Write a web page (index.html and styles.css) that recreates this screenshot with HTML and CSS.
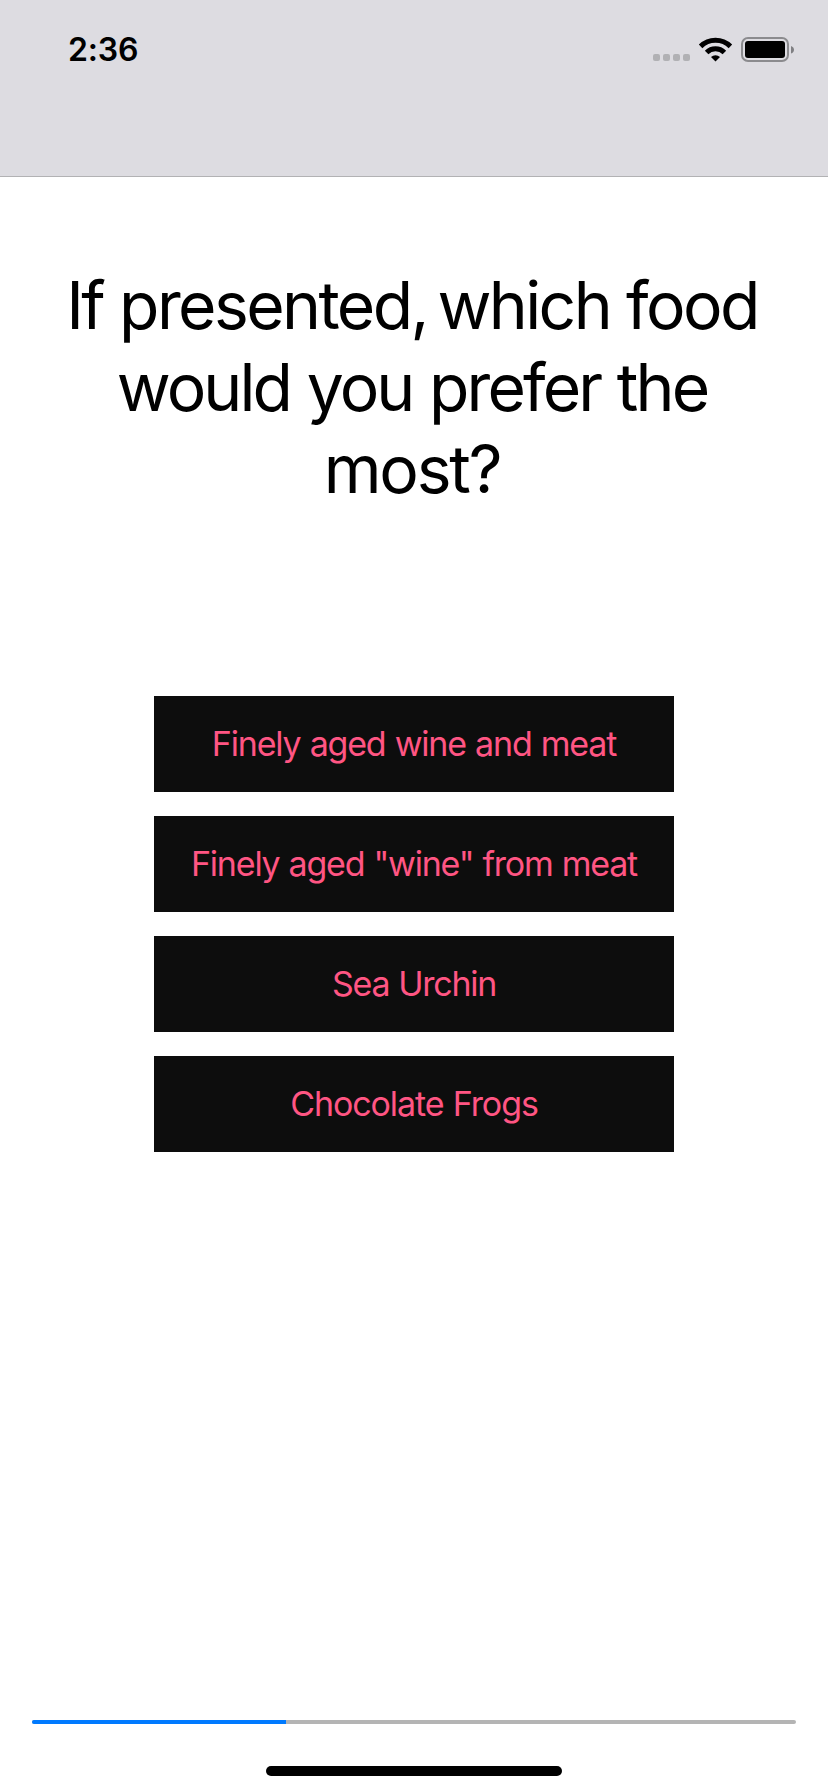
FILE: index.html
```html
<!DOCTYPE html>
<html lang="en">
<head>
<meta charset="utf-8">
<title>Question</title>
<link rel="stylesheet" href="styles.css">
</head>
<body>
<div class="screen">
  <header class="nav-bar">
    <span class="time">2:36</span>
    <svg class="status-icons" width="144" height="32" viewBox="650 32 144 32">
      <g fill="#b1b1b4">
        <rect x="653" y="54" width="7" height="7" rx="2"/>
        <rect x="663" y="54" width="7" height="7" rx="2"/>
        <rect x="673" y="54" width="7" height="7" rx="2"/>
        <rect x="683" y="54" width="7" height="7" rx="2"/>
      </g>
      <g fill="none" stroke="#000" stroke-width="5">
        <path d="M700.6 46.4a21.2 21.2 0 0 1 29.8 0"/>
        <path d="M706.6 52.5a12.7 12.7 0 0 1 17.8 0"/>
      </g>
      <path d="M711 56.9a6.6 6.6 0 0 1 9 0l-4.5 4.5z"/>
      <rect x="742" y="38" width="46" height="23" rx="6" fill="none" stroke="#8b8b8e" stroke-width="2"/>
      <rect x="745" y="41" width="40" height="17" rx="3"/>
      <path d="M791 46c4 1.4 4 6.200 0 7.600z" fill="#7f7f82"/>
    </svg>
  </header>
  <main class="content">
    <h1 class="question"><span class="line-1">If presented<span class="comma">,</span> which food</span><br><span class="line-2">would you prefer the</span><br><span class="line-3">most?</span></h1>
    <div class="answers">
      <button class="answer wine">Finely aged wine and meat</button>
      <button class="answer from-meat">Finely aged "wine" from meat</button>
      <button class="answer urchin">Sea Urchin</button>
      <button class="answer frogs">Chocolate Frogs</button>
    </div>
  </main>
  <footer class="footer">
    <div class="progress"><div class="progress-fill"></div></div>
    <div class="home-indicator"></div>
  </footer>
</div>
</body>
</html>
```
FILE: styles.css
```css
* { box-sizing: border-box; }
body { margin: 0; background: #fff; font-family: Inter, "Liberation Sans", sans-serif; }
.screen { width: 828px; height: 1792px; display: flex; flex-direction: column; overflow: hidden; }
.nav-bar {
  height: 177px; flex: none; display: flex; justify-content: space-between; align-items: flex-start;
  padding: 32px 34px 0 68px; background: #dddce1; border-bottom: 1px solid #b2b2b4;
}
.time { font-size: 32px; font-weight: 600; line-height: 36px; letter-spacing: -0.2px; }
.status-icons { display: block; }
.content { flex: 1; padding-top: 87px; display: flex; flex-direction: column; align-items: center; }
.question {
  margin: 0; padding-right: 4px; font-size: 66px; line-height: 82px; font-weight: 400;
  letter-spacing: -2.2px; text-align: center; white-space: nowrap; color: #000;
}
.line-1 { letter-spacing: -2.6px; word-spacing: 0; }
.comma { letter-spacing: -8.1px; }
.line-2 { letter-spacing: -2.9px; word-spacing: 1px; }
.answers { margin-top: 186px; width: 520px; display: flex; flex-direction: column; gap: 24px; }
.answer {
  height: 96px; padding: 0; border: 0; background: #0d0d0d; color: #ff5583;
  font: 400 34px/96px Inter, "Liberation Sans", sans-serif; text-align: center; white-space: nowrap;
  letter-spacing: -1.2px; word-spacing: 0.9px;
}
.from-meat { word-spacing: 0.7px; }
.urchin { letter-spacing: -1.3px; }
.frogs { letter-spacing: -1.1px; }
.footer { padding: 0 32px 16px; display: flex; flex-direction: column; align-items: center; }
.progress { width: 764px; height: 4px; border-radius: 2px; overflow: hidden; background: #b4b4b4; }
.progress-fill { width: 254px; height: 4px; background: #007aff; }
.home-indicator { margin-top: 42px; width: 296px; height: 10px; border-radius: 5px; background: #000; }
```
